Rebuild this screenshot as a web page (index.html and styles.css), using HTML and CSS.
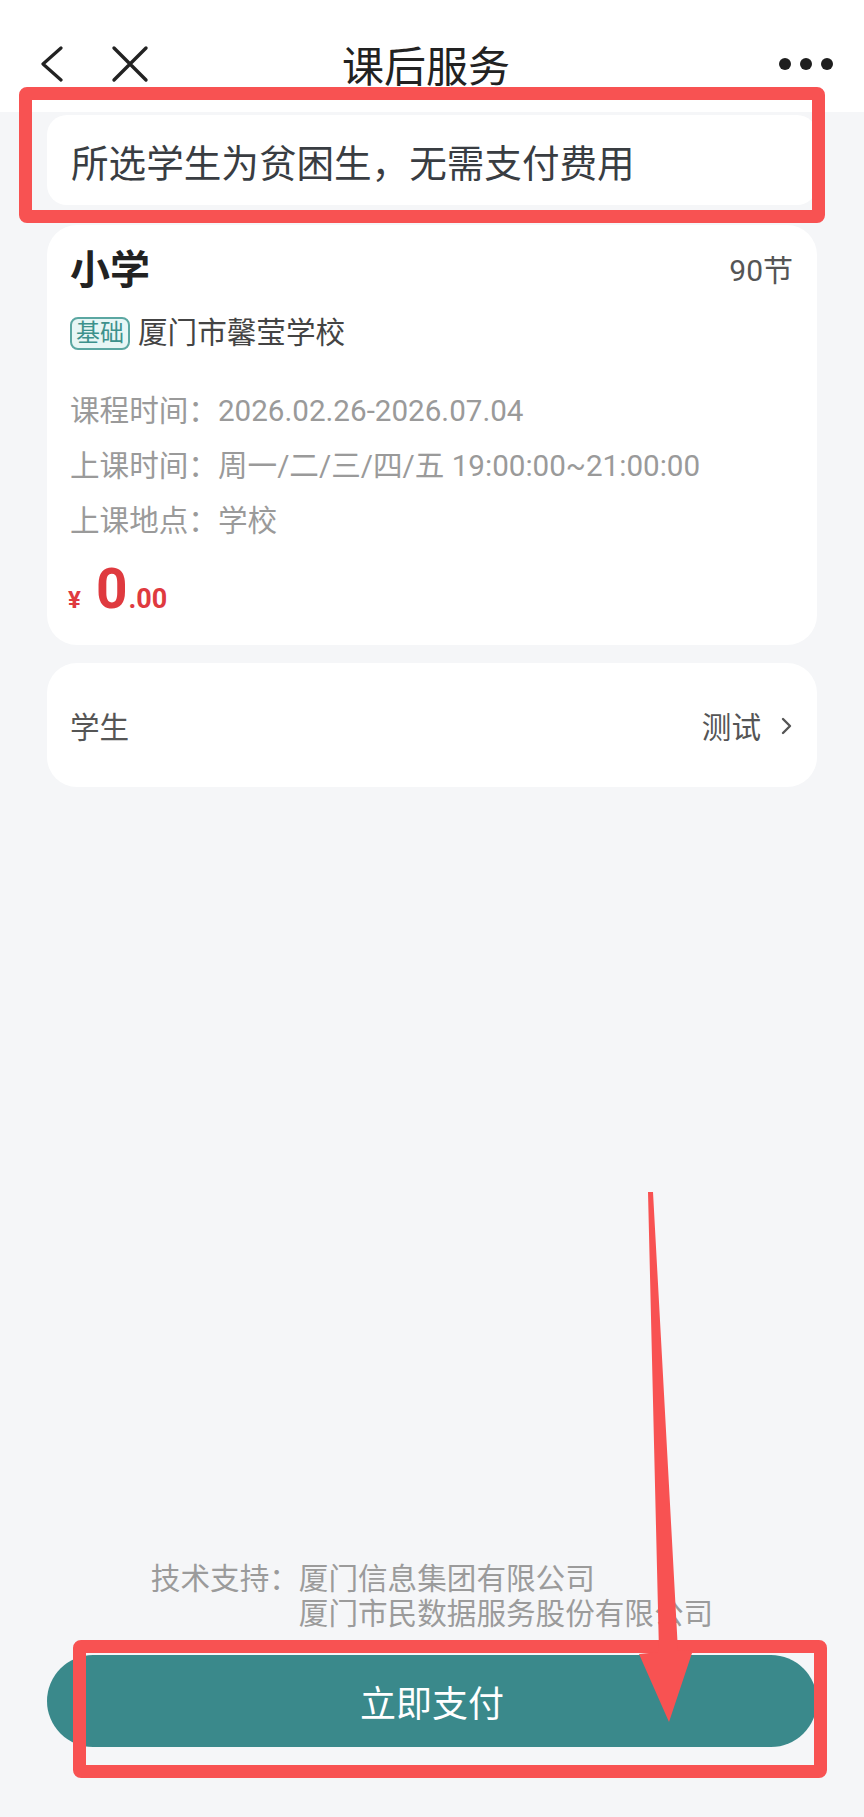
FILE: index.html
```html
<!DOCTYPE html>
<html lang="zh-CN">
<head>
<meta charset="utf-8">
<title>课后服务</title>
<link rel="stylesheet" href="styles.css">
</head>
<body>
<div class="page">
  <header class="nav">
    <div class="nav-left">
      <svg class="ico-back" width="24" height="36" viewBox="0 0 24 36"><polyline points="21,2 3,18 21,34" fill="none" stroke="#222" stroke-width="3.2" stroke-linecap="round" stroke-linejoin="round"/></svg>
      <svg class="ico-close" width="38" height="38" viewBox="0 0 38 38"><path d="M3 3 L35 35 M35 3 L3 35" fill="none" stroke="#222" stroke-width="3.4" stroke-linecap="round"/></svg>
    </div>
    <div class="nav-title">课后服务</div>
    <div class="nav-right">
      <svg class="ico-more" width="58" height="14" viewBox="0 0 58 14"><circle cx="7" cy="7" r="6" fill="#1e1e1e"/><circle cx="28" cy="7" r="6" fill="#1e1e1e"/><circle cx="49" cy="7" r="6" fill="#1e1e1e"/></svg>
    </div>
  </header>

  <main class="content">
    <div class="notice">所选学生为贫困生，无需支付费用</div>

    <section class="card course">
      <div class="course-head">
        <span class="course-name">小学</span>
        <span class="course-count">90节</span>
      </div>
      <div class="course-school">
        <span class="tag">基础</span>
        <span class="school">厦门市馨莹学校</span>
      </div>
      <div class="info">
        <div class="info-line">课程时间：2026.02.26-2026.07.04</div>
        <div class="info-line">上课时间：周一/二/三/四/五 19:00:00~21:00:00</div>
        <div class="info-line">上课地点：学校</div>
      </div>
      <div class="price">
        <span class="yen">¥</span>
        <span class="int">0</span><span class="dec">.00</span>
      </div>
    </section>

    <section class="card student">
      <span class="student-label">学生</span>
      <span class="student-value">测试
        <svg class="ico-arrow" width="12" height="18" viewBox="0 0 12 18"><polyline points="2,2 9,9 2,16" fill="none" stroke="#555" stroke-width="2.4" stroke-linecap="round" stroke-linejoin="round"/></svg>
      </span>
    </section>
  </main>

  <footer class="footer">
    <div class="support">
      <span class="support-label">技术支持：</span>
      <div class="support-list">
        <div>厦门信息集团有限公司</div>
        <div>厦门市民数据服务股份有限公司</div>
      </div>
    </div>
    <button class="pay">立即支付</button>
  </footer>

  <div class="mark mark-notice"></div>
  <div class="mark mark-pay"></div>
  <svg class="mark-arrow" width="70" height="545" viewBox="630 1185 70 545">
    <polygon points="648,1192 653,1192 678,1651 693,1650 669,1722 639,1654 659,1652" fill="#f85252"/>
  </svg>
</div>
</body>
</html>
```

FILE: styles.css
```css
* {
  box-sizing: border-box;
}

html, body {
  margin: 0;
  padding: 0;
}

body {
  background: #f5f6f8;
  font-family: Roboto, "Noto Sans CJK SC", "Noto Sans", sans-serif;
  color: #333;
}

.page {
  position: relative;
  width: 864px;
  height: 1817px;
  display: flex;
  flex-direction: column;
  overflow: hidden;
}

/* nav */
.nav {
  height: 112px;
  background: #fff;
  padding-top: 32px;
  display: grid;
  grid-template-columns: 1fr auto 1fr;
  align-items: start;
}

.nav-left,
.nav-right {
  height: 64px;
  display: flex;
  align-items: center;
}

.nav-left {
  padding-left: 40px;
  gap: 47px;
}

.nav-right {
  justify-content: flex-end;
  padding-right: 28px;
}

.ico-back,
.ico-close,
.ico-more {
  display: block;
}

.nav-title {
  height: 64px;
  line-height: 64px;
  font-size: 42px;
  color: #222;
  padding-right: 12px;
  font-family: "Noto Sans CJK SC", sans-serif;
}

/* content */
.content {
  padding: 3px 47px 0;
  display: flex;
  flex-direction: column;
}

.notice {
  height: 90px;
  background: #fff;
  border-radius: 20px;
  display: flex;
  align-items: center;
  padding-left: 24px;
  font-size: 37.6px;
  color: #393d42;
  font-family: "Noto Sans CJK SC", sans-serif;
}

.card {
  background: #fff;
  border-radius: 30px;
}

.course {
  margin-top: 20px;
  height: 420px;
  padding: 22px 24px 0 23px;
}

.course-head {
  height: 48px;
  display: flex;
  justify-content: space-between;
  align-items: center;
}

.course-name {
  font-size: 40px;
  font-weight: 700;
  color: #222;
  line-height: 48px;
}

.course-count {
  font-size: 30px;
  color: #555;
  line-height: 48px;
}

.course-school {
  margin-top: 21px;
  height: 34px;
  display: flex;
  align-items: center;
  gap: 8px;
}

.tag {
  height: 33px;
  padding: 0 4px;
  border: 2px solid #5ba7a2;
  border-radius: 8px;
  background: #e7f6f5;
  color: #3d918c;
  font-size: 24px;
  line-height: 29px;
}

.school {
  font-size: 29.6px;
  color: #444;
  line-height: 34px;
}

.info {
  margin-top: 34px;
}

.info-line {
  height: 55px;
  line-height: 55px;
  font-size: 29.6px;
  color: #9a9a9a;
  white-space: nowrap;
}

.price {
  margin-top: 10px;
  height: 60px;
  display: flex;
  align-items: baseline;
  color: #df3a3f;
  font-weight: 700;
  line-height: 60px;
}

.yen {
  font-size: 24px;
  margin-left: -2px;
  margin-right: 15px;
}

.int {
  font-size: 55px;
}

.dec {
  font-size: 27px;
  margin-left: 1px;
}

.student {
  margin-top: 18px;
  height: 124px;
  padding: 0 24px 0 23px;
  display: flex;
  justify-content: space-between;
  align-items: center;
}

.student-label {
  font-size: 29.6px;
  color: #555;
}

.student-value {
  display: flex;
  align-items: center;
  gap: 20px;
  font-size: 29.6px;
  color: #555;
}

.ico-arrow {
  display: block;
  margin-top: 2px;
}

/* footer */
.footer {
  margin-top: auto;
  padding: 0 47px 70px;
  display: flex;
  flex-direction: column;
  align-items: center;
}

.support {
  display: flex;
  font-size: 29.6px;
  line-height: 35px;
  color: #9b9b9b;
}

.pay {
  margin-top: 23px;
  width: 770px;
  height: 92px;
  border: none;
  border-radius: 46px;
  background: #3a898b;
  color: #fff;
  font-family: "Noto Sans CJK SC", sans-serif;
  font-size: 36px;
  padding: 0;
}

/* annotation overlays */
.mark {
  position: absolute;
  border: 13px solid #f85252;
  border-radius: 8px;
  pointer-events: none;
}

.mark-notice {
  left: 19px;
  top: 87px;
  width: 806px;
  height: 136px;
}

.mark-pay {
  left: 73px;
  top: 1640px;
  width: 754px;
  height: 138px;
}

.mark-arrow {
  position: absolute;
  left: 630px;
  top: 1185px;
  pointer-events: none;
}
```
